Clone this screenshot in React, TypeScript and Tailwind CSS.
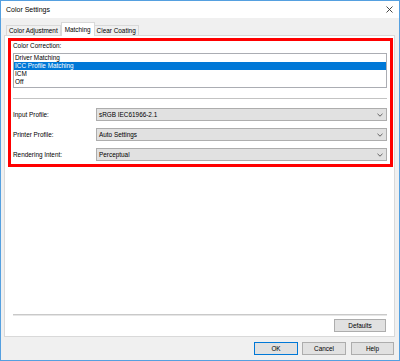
import { ReactNode } from 'react';

const corrections = ['Driver Matching', 'ICC Profile Matching', 'ICM', 'Off'];

const profiles = [
  { label: 'Input Profile:', value: 'sRGB IEC61966-2.1' },
  { label: 'Printer Profile:', value: 'Auto Settings' },
  { label: 'Rendering Intent:', value: 'Perceptual' },
];

const Chevron = () => (
  <svg width="6" height="4" viewBox="0 0 6 4" className="shrink-0">
    <path d="M0.5 0.8 L3 3.2 L5.5 0.8" fill="none" stroke="#555" strokeWidth="0.9" />
  </svg>
);

const Button = ({ children, width, primary }: { children: ReactNode; width: string; primary?: boolean }) => (
  <div
    className={`${width} h-[13px] flex items-center justify-center bg-[#e1e1e1] border ${
      primary ? 'border-[#0078d7]' : 'border-[#adadad]'
    }`}
  >
    {children}
  </div>
);

export default function App() {
  return (
    <div className="w-[400px] h-[361px] flex flex-col bg-[#f0f0f0] border border-[#55a0e0] font-['Liberation_Sans',Arial,sans-serif] text-[6.4px] leading-[8px] text-black overflow-hidden">
      {/* title bar */}
      <div className="h-[17px] shrink-0 bg-white flex items-center justify-between pl-[5px] pr-[6px] text-[7px]">
        <span>Color Settings</span>
        <svg width="7" height="7" viewBox="0 0 7 7">
          <path d="M0.5 0.5 L6.5 6.5 M6.5 0.5 L0.5 6.5" stroke="#333" strokeWidth="0.9" />
        </svg>
      </div>

      <div className="pl-[3px] flex flex-col">
        {/* tabs */}
        <div className="h-[17px] flex items-end pl-[2px]">
          <div className="h-[10px] px-[2px] flex items-center border border-b-0 border-[#d9d9d9] bg-[#f0f0f0]">
            Color Adjustment
          </div>
          <div className="relative z-10 h-[14px] -mb-px px-[3px] flex items-center border border-b-0 border-[#d9d9d9] bg-white">
            Matching
          </div>
          <div className="h-[10px] px-[2px] flex items-center border border-b-0 border-l-0 border-[#d9d9d9] bg-[#f0f0f0]">
            Clear Coating
          </div>
        </div>

        {/* tab panel */}
        <div className="w-[391px] h-[302px] flex flex-col border border-[#d9d9d9] bg-white">
          <div className="mt-[2px] ml-[3px] w-[385px] h-[129px] shrink-0 border-[3px] border-[#ff0000] flex flex-col pl-[2px] pt-[1px]">
            <div className="h-[8px]">Color Correction:</div>
            <div className="mt-[3px] w-[374px] h-[35px] border border-[#abadb3] bg-white">
              {corrections.map((item) => (
                <div
                  key={item}
                  className={`h-[8px] pl-[1px] ${item === 'ICC Profile Matching' ? 'bg-[#0078d7] text-white' : ''}`}
                >
                  {item}
                </div>
              ))}
            </div>
            <div className="mt-[10px] w-[374px] h-px bg-[#c3c3c3]" />
            <div className="mt-[9px] flex flex-col gap-[7px]">
              {profiles.map((p) => (
                <div key={p.label} className="flex items-center h-[13px]">
                  <div className="w-[83px]">{p.label}</div>
                  <div className="w-[291px] h-[13px] flex items-center justify-between pl-[2px] pr-[3px] bg-[#e1e1e1] border border-[#adadad]">
                    <span>{p.value}</span>
                    <Chevron />
                  </div>
                </div>
              ))}
            </div>
          </div>

          <div className="flex-1" />
          <div className="ml-[8px] w-[374px] h-px bg-[#c9c9c9]" />
          <div className="ml-[8px] w-[374px] h-px bg-[#e6e6e6]" />
          <div className="mt-[3px] mb-[4px] mr-[8px] self-end">
            <Button width="w-[52px]">Defaults</Button>
          </div>
        </div>
      </div>

      {/* dialog buttons */}
      <div className="mt-[5px] pr-[5px] flex justify-end">
        <Button width="w-[44px]" primary>
          OK
        </Button>
        <div className="ml-[4px]">
          <Button width="w-[44px]">Cancel</Button>
        </div>
        <div className="ml-[5px]">
          <Button width="w-[43px]">Help</Button>
        </div>
      </div>
    </div>
  );
}
